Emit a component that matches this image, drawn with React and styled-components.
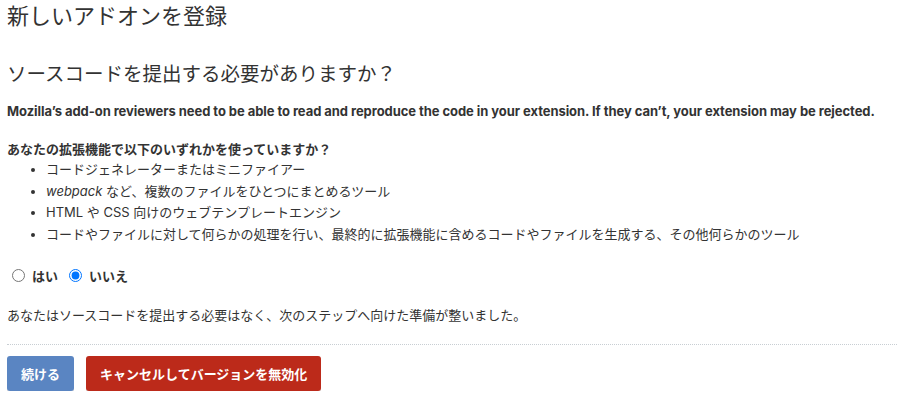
import React from "react";
import styled, { createGlobalStyle } from "styled-components";

const Global = createGlobalStyle`
  html, body { margin: 0; padding: 0; background: #fff; }
  body { font-family: "Inter", "Noto Sans CJK JP", sans-serif; color: #333; font-size: 13px; }
`;

const Page = styled.div`
  padding: 0 0 0 7px;
`;

const Title = styled.h1`
  margin: 0;
  font-size: 22px;
  font-weight: 400;
  line-height: 33px;
`;

const SubTitle = styled.h2`
  margin: 26px 0 0;
  font-size: 19.5px;
  font-weight: 400;
  line-height: 30px;
`;

const Lead = styled.p`
  margin: 12px 0 0;
  font-weight: 700;
  line-height: 20px;
  letter-spacing: -0.06px;
`;

const Question = styled.p`
  margin: 18px 0 0;
  font-weight: 700;
  line-height: 20px;
`;

const List = styled.ul`
  margin: 0;
  padding-left: 39px;
  line-height: 21.5px;
`;

const Item = styled.li`
  margin: 0;
`;

const RadioRow = styled.div`
  display: flex;
  align-items: center;
  margin-top: 19px;
  height: 22px;
`;

const RadioLabel = styled.label`
  display: inline-flex;
  align-items: center;
  font-weight: 700;
  margin-right: 6px;
  input { margin: 0 7px 0 5px; width: 13px; height: 13px; }
`;

const Note = styled.p`
  margin: 19px 0 0;
  line-height: 20px;
`;

const Footer = styled.div`
  margin-top: 19px;
  border-top: 1px dotted #c8ced3;
  padding-top: 11px;
  display: flex;
  gap: 12px;
`;

const Button = styled.button`
  height: 35px;
  padding: 0 14px;
  border: none;
  border-radius: 3px;
  background: ${(p) => p.$bg};
  color: #fff;
  font-family: inherit;
  font-size: 13px;
  font-weight: 700;
  box-shadow: 0 2px 0 rgba(0, 0, 0, 0.12);
  cursor: pointer;
`;

export default function App() {
  return (
    <Page>
      <Global />
      <Title>新しいアドオンを登録</Title>
      <SubTitle>ソースコードを提出する必要がありますか？</SubTitle>
      <Lead>
        Mozilla’s add-on reviewers need to be able to read and reproduce the code in your extension. If they can’t, your extension may be rejected.
      </Lead>
      <Question>あなたの拡張機能で以下のいずれかを使っていますか？</Question>
      <List>
        <Item>コードジェネレーターまたはミニファイアー</Item>
        <Item><em>webpack</em> など、複数のファイルをひとつにまとめるツール</Item>
        <Item>HTML や CSS 向けのウェブテンプレートエンジン</Item>
        <Item>コードやファイルに対して何らかの処理を行い、最終的に拡張機能に含めるコードやファイルを生成する、その他何らかのツール</Item>
      </List>
      <RadioRow>
        <RadioLabel><input type="radio" name="src" />はい</RadioLabel>
        <RadioLabel><input type="radio" name="src" defaultChecked />いいえ</RadioLabel>
      </RadioRow>
      <Note>あなたはソースコードを提出する必要はなく、次のステップへ向けた準備が整いました。</Note>
      <Footer>
        <Button $bg="#5a85c2">続ける</Button>
        <Button $bg="#bc2a1a">キャンセルしてバージョンを無効化</Button>
      </Footer>
    </Page>
  );
}
